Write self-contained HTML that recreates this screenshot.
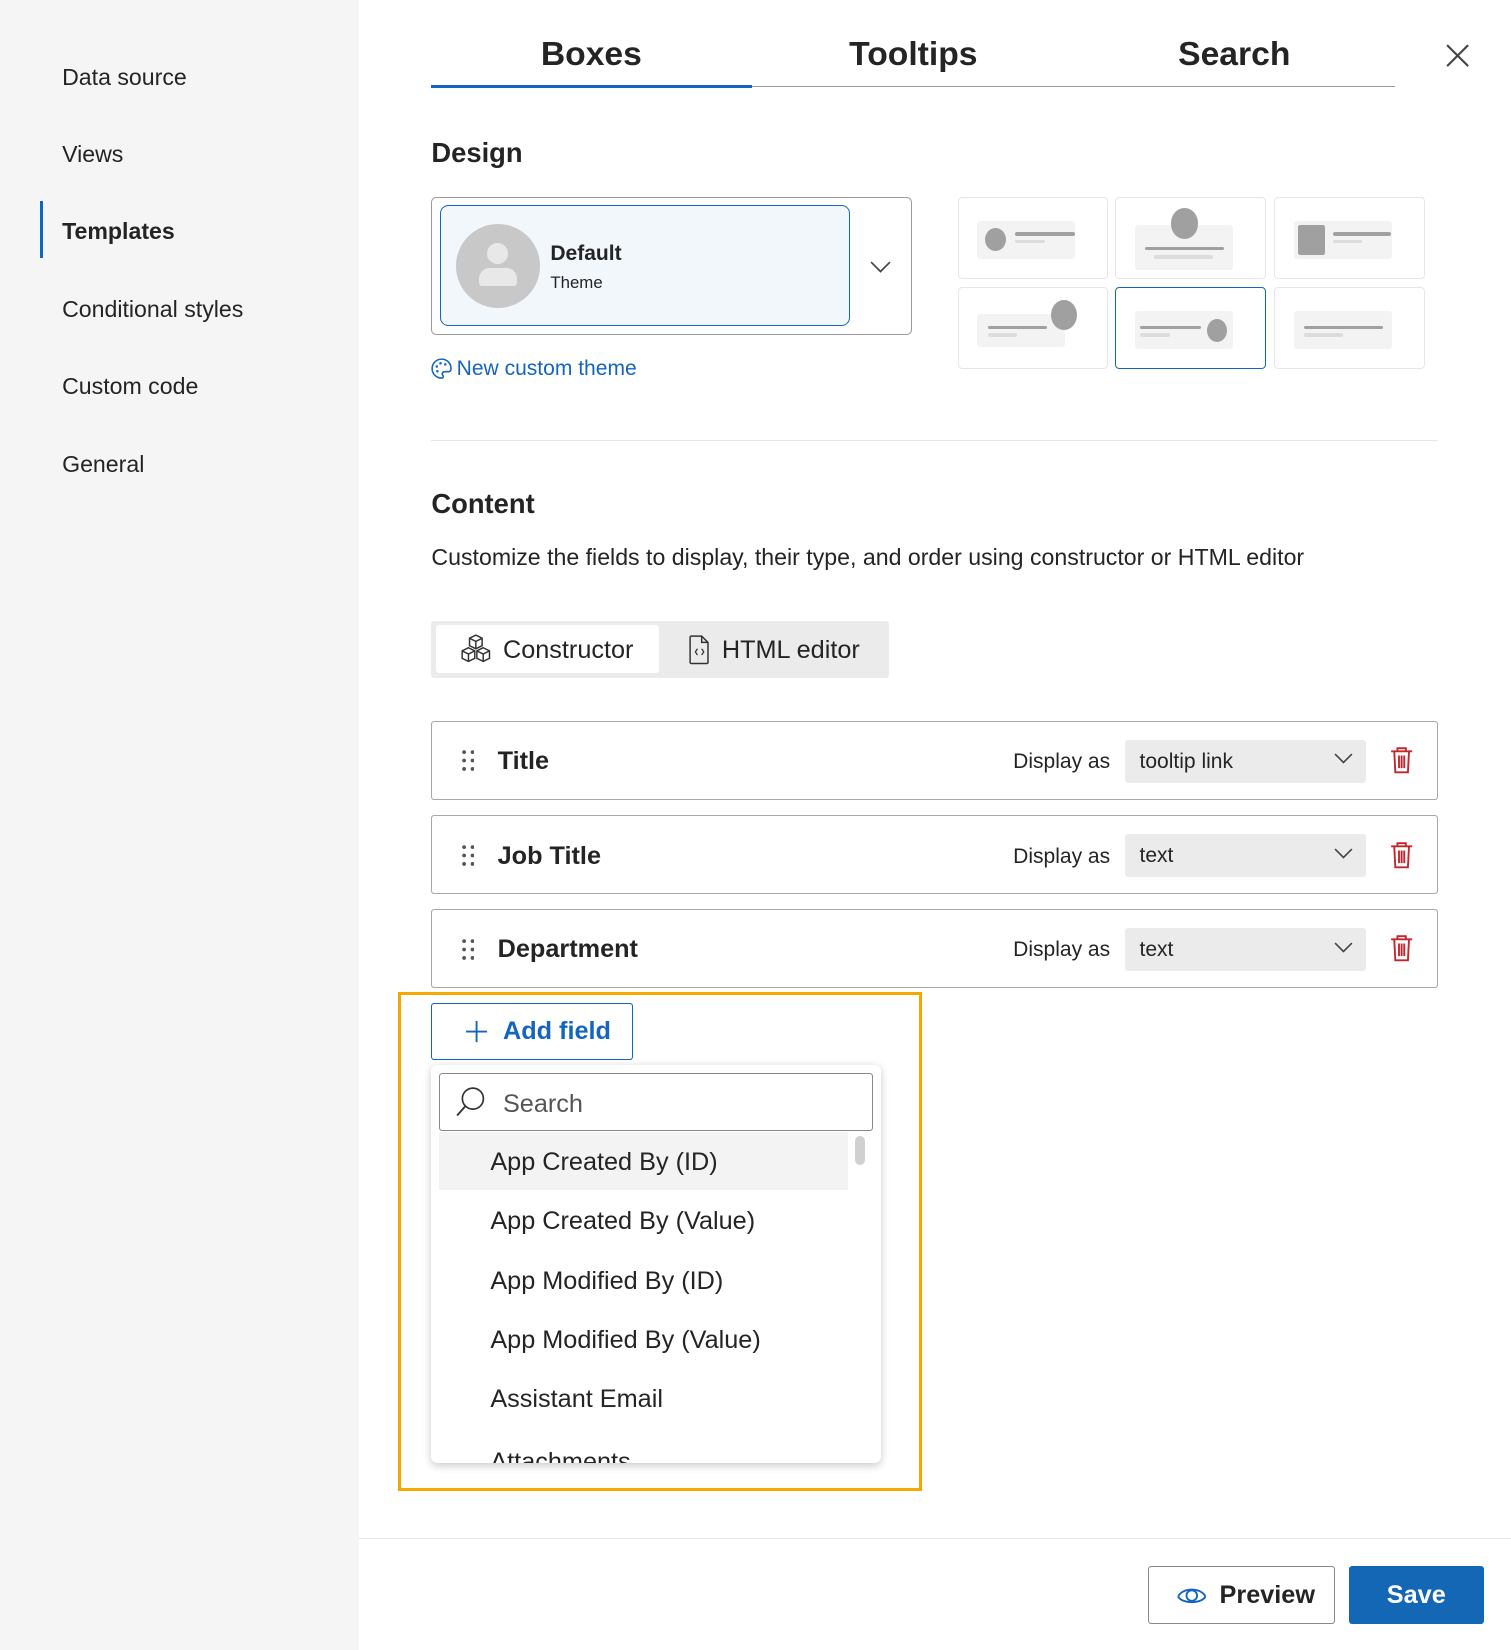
<!DOCTYPE html>
<html><head><meta charset="utf-8"><style>
*{box-sizing:border-box;margin:0;padding:0}
html,body{width:1511px;height:1650px;overflow:hidden;background:#fff}
#w{zoom:1.05223;position:relative;width:1436px;height:1568px;font-family:"Segoe UI","Liberation Sans",sans-serif;color:#242424}
.a{position:absolute}
.side{left:0;top:0;width:341px;height:1568px;background:#f5f5f5}
.nav{left:59px;font-size:22px;line-height:30px;color:#242424}
.tab{top:30px;font-size:32px;font-weight:600;line-height:44px;transform:translateX(-50%);color:#242424}
.h{font-size:26px;font-weight:600;line-height:34px}
.cell{width:143px;height:78px;border:1px solid #e6e6e6;border-radius:4px;background:#fff}
.cell .in{position:absolute;background:#f3f3f3;border-radius:3px}
.bar{position:absolute;height:3px;background:#a0a0a0;border-radius:2px}
.bar2{position:absolute;height:3px;background:#dcdcdc;border-radius:2px}
.dot{position:absolute;background:#a0a0a0;border-radius:50%}
.row{left:410px;width:957px;height:75px;border:1px solid #a8a8a8;border-radius:3px}
.row .t{position:absolute;left:62px;top:22px;font-size:24px;font-weight:600;line-height:32px}
.row .d{position:absolute;right:311px;top:24px;font-size:20px;line-height:28px}
.row .s{position:absolute;left:658px;top:17px;width:229px;height:41px;background:#ebebeb;border-radius:3px;font-size:20px;line-height:41px;padding-left:14px}
.item{left:466px;font-size:24px;line-height:32px;color:#242424}
</style></head><body><div id="w">
<div class="a side"></div>
<div class="a nav" style="top:59px">Data source</div>
<div class="a nav" style="top:132px">Views</div>
<div class="a" style="left:38px;top:191px;width:3px;height:54px;background:#1565c0"></div>
<div class="a nav" style="top:205px;font-weight:600">Templates</div>
<div class="a nav" style="top:279px">Conditional styles</div>
<div class="a nav" style="top:353px">Custom code</div>
<div class="a nav" style="top:427px">General</div>

<div class="a tab" style="left:562px">Boxes</div>
<div class="a tab" style="left:868px">Tooltips</div>
<div class="a tab" style="left:1173px">Search</div>
<div class="a" style="left:410px;top:82px;width:916px;height:1px;background:#999"></div>
<div class="a" style="left:410px;top:81px;width:305px;height:3px;background:#1565c0"></div>
<svg class="a" style="left:1373px;top:41px" width="24" height="24" viewBox="0 0 24 24"><path d="M2 2L22 22M22 2L2 22" stroke="#444" stroke-width="2"/></svg>

<div class="a h" style="left:410px;top:128px">Design</div>
<div class="a" style="left:410px;top:187px;width:457px;height:131px;border:1px solid #9a9a9a;border-radius:5px"></div>
<div class="a" style="left:418px;top:195px;width:390px;height:115px;background:#f2f7fc;border:1px solid #1565c0;border-radius:8px"></div>
<div class="a" style="left:433px;top:213px;width:80px;height:80px;border-radius:50%;background:#c8c8c8"></div>
<div class="a" style="left:463px;top:231px;width:20px;height:20px;border-radius:50%;background:#e8e8e8"></div>
<div class="a" style="left:455px;top:255px;width:36px;height:17px;border-radius:10px 10px 3px 3px;background:#e8e8e8"></div>
<div class="a" style="left:523px;top:227px;font-size:20px;font-weight:600;line-height:28px">Default</div>
<div class="a" style="left:523px;top:258px;font-size:16px;line-height:22px">Theme</div>
<svg class="a" style="left:827px;top:248px" width="20" height="12" viewBox="0 0 20 12"><path d="M1 1L10 10L19 1" stroke="#444" stroke-width="1.6" fill="none"/></svg>
<svg class="a" style="left:409px;top:339px" width="22" height="22" viewBox="0 0 22 22"><path d="M11 2a9 9 0 1 0 0 18c2 0 2-2 1-3s0-3 2-3h3c2 0 3-1 3-3 0-5-4-9-9-9z" stroke="#1565c0" stroke-width="1.5" fill="none"/><circle cx="6.5" cy="9" r="1.2" fill="#1565c0"/><circle cx="10" cy="6" r="1.2" fill="#1565c0"/><circle cx="14.5" cy="7" r="1.2" fill="#1565c0"/><circle cx="7" cy="13.5" r="1.2" fill="#1565c0"/></svg>
<div class="a" style="left:434px;top:336px;font-size:20px;line-height:28px;color:#1565c0">New custom theme</div>

<div class="a cell" style="left:910px;top:187px"><div class="in" style="left:18px;top:22px;width:93px;height:36px"></div><div class="dot" style="left:25px;top:29px;width:20px;height:22px"></div><div class="bar" style="left:54px;top:33px;width:57px"></div><div class="bar2" style="left:54px;top:40px;width:28px"></div></div>
<div class="a cell" style="left:1060px;top:187px"><div class="in" style="left:18px;top:26px;width:93px;height:43px"></div><div class="dot" style="left:52px;top:10px;width:26px;height:29px"></div><div class="bar" style="left:27px;top:47px;width:75px"></div><div class="bar2" style="left:36px;top:54px;width:56px;height:4px"></div></div>
<div class="a cell" style="left:1211px;top:187px"><div class="in" style="left:18px;top:22px;width:93px;height:36px"></div><div style="position:absolute;left:22px;top:26px;width:25px;height:28px;background:#a0a0a0;border-radius:2px"></div><div class="bar" style="left:55px;top:33px;width:55px"></div><div class="bar2" style="left:55px;top:40px;width:27px"></div></div>
<div class="a cell" style="left:910px;top:273px"><div class="in" style="left:18px;top:24px;width:83px;height:32px"></div><div class="dot" style="left:88px;top:11px;width:25px;height:29px"></div><div class="bar" style="left:28px;top:36px;width:56px"></div><div class="bar2" style="left:28px;top:43px;width:28px"></div></div>
<div class="a cell" style="left:1060px;top:273px;border-color:#1565c0"><div class="in" style="left:18px;top:22px;width:93px;height:36px"></div><div class="dot" style="left:86px;top:29px;width:19px;height:22px"></div><div class="bar" style="left:22px;top:36px;width:58px"></div><div class="bar2" style="left:22px;top:43px;width:29px"></div></div>
<div class="a cell" style="left:1211px;top:273px"><div class="in" style="left:18px;top:22px;width:93px;height:36px"></div><div class="bar" style="left:27px;top:36px;width:75px"></div><div class="bar2" style="left:27px;top:43px;width:37px"></div></div>

<div class="a" style="left:410px;top:418px;width:957px;height:1px;background:#e6e6e6"></div>
<div class="a h" style="left:410px;top:462px">Content</div>
<div class="a" style="left:410px;top:515px;font-size:22px;line-height:30px">Customize the fields to display, their type, and order using constructor or HTML editor</div>

<div class="a" style="left:410px;top:590px;width:435px;height:54px;background:#ebebeb;border-radius:3px"></div>
<div class="a" style="left:414px;top:594px;width:212px;height:46px;background:#fff;border-radius:3px"></div>
<svg class="a" style="left:436px;top:602px" width="32" height="30" viewBox="0 0 32 30"><g stroke="#333" stroke-width="1.4" fill="none"><path d="M16 2l6 3v7l-6 3-6-3V5z M10 5l6 3 6-3 M16 8v7"/><path d="M9 14l6 3v7l-6 3-6-3v-7z M3 17l6 3 6-3 M9 20v7"/><path d="M23 14l6 3v7l-6 3-6-3v-7z M17 17l6 3 6-3 M23 20v7"/></g></svg>
<div class="a" style="left:478px;top:603px;font-size:24px;line-height:32px">Constructor</div>
<svg class="a" style="left:654px;top:603px" width="22" height="30" viewBox="0 0 22 30"><path d="M3 2h10l6 6v19a1 1 0 0 1-1 1H3a1 1 0 0 1-1-1V3a1 1 0 0 1 1-1z M13 2v6h6" stroke="#333" stroke-width="1.4" fill="none"/><path d="M9 14l-2 3 2 3 M13 14l2 3-2 3" stroke="#333" stroke-width="1.2" fill="none"/></svg>
<div class="a" style="left:686px;top:603px;font-size:24px;line-height:32px">HTML editor</div>

<svg width="0" height="0" style="position:absolute"><defs><g id="dr"><circle cx="2" cy="2" r="1.8"/><circle cx="10" cy="2" r="1.8"/><circle cx="2" cy="10" r="1.8"/><circle cx="10" cy="10" r="1.8"/><circle cx="2" cy="18" r="1.8"/><circle cx="10" cy="18" r="1.8"/></g><g id="tr" stroke="#c4262e" stroke-width="1.8" fill="none"><path d="M2 6h20 M8 6V3h8v3 M5 6l1 20h12l1-20 M9.5 10v12 M12 10v12 M14.5 10v12"/></g><g id="ch"><path d="M1 1L9 9L17 1" stroke="#444" stroke-width="1.5" fill="none"/></g></defs></svg>

<div class="a row" style="top:685px"><svg style="position:absolute;left:28px;top:27px" width="12" height="20" fill="#555"><use href="#dr"/></svg><div class="t">Title</div><div class="d">Display as</div><div class="s">tooltip link</div><svg style="position:absolute;left:857px;top:30px" width="18" height="11"><use href="#ch"/></svg><svg style="position:absolute;left:909px;top:22px" width="24" height="29"><use href="#tr"/></svg></div>
<div class="a row" style="top:775px"><svg style="position:absolute;left:28px;top:27px" width="12" height="20" fill="#555"><use href="#dr"/></svg><div class="t">Job Title</div><div class="d">Display as</div><div class="s">text</div><svg style="position:absolute;left:857px;top:30px" width="18" height="11"><use href="#ch"/></svg><svg style="position:absolute;left:909px;top:22px" width="24" height="29"><use href="#tr"/></svg></div>
<div class="a row" style="top:864px"><svg style="position:absolute;left:28px;top:27px" width="12" height="20" fill="#555"><use href="#dr"/></svg><div class="t">Department</div><div class="d">Display as</div><div class="s">text</div><svg style="position:absolute;left:857px;top:30px" width="18" height="11"><use href="#ch"/></svg><svg style="position:absolute;left:909px;top:22px" width="24" height="29"><use href="#tr"/></svg></div>

<div class="a" style="left:378px;top:943px;width:498px;height:474px;border:3px solid #f5a800"></div>
<div class="a" style="left:410px;top:953px;width:192px;height:54px;border:1px solid #1565c0;border-radius:3px"></div>
<svg class="a" style="left:442px;top:969px" width="22" height="22"><path d="M11 1v20M1 11h20" stroke="#1565c0" stroke-width="1.8"/></svg>
<div class="a" style="left:478px;top:965px;font-size:24px;font-weight:600;line-height:32px;color:#1565c0">Add field</div>

<div class="a" style="left:410px;top:1012px;width:427px;height:378px;background:#fff;border-radius:6px;box-shadow:0 2px 8px rgba(0,0,0,.22);overflow:hidden">
 <div class="a" style="left:7px;top:8px;width:413px;height:55px;border:1px solid #8a8a8a;border-radius:3px"></div>
 <svg class="a" style="left:22px;top:20px" width="30" height="32" viewBox="0 0 30 32"><circle cx="17" cy="12" r="10" stroke="#333" stroke-width="1.6" fill="none"/><path d="M10 19L2 28" stroke="#333" stroke-width="1.8"/></svg>
 <div class="a" style="left:68px;top:22px;font-size:24px;line-height:32px;color:#555">Search</div>
 <div class="a" style="left:7px;top:64px;width:389px;height:55px;background:#f3f3f3"></div>
 <div class="a" style="left:403px;top:68px;width:9px;height:27px;background:#d0d0d0;border-radius:5px"></div>
 <div class="a item" style="left:56px;top:77px">App Created By (ID)</div>
 <div class="a item" style="left:56px;top:133px">App Created By (Value)</div>
 <div class="a item" style="left:56px;top:190px">App Modified By (ID)</div>
 <div class="a item" style="left:56px;top:246px">App Modified By (Value)</div>
 <div class="a item" style="left:56px;top:302px">Assistant Email</div>
 <div class="a item" style="left:56px;top:362px">Attachments</div>
</div>

<div class="a" style="left:341px;top:1462px;width:1095px;height:1px;background:#e6e6e6"></div>
<div class="a" style="left:1091px;top:1488px;width:178px;height:55px;border:1px solid #8a8a8a;border-radius:3px"></div>
<svg class="a" style="left:1118px;top:1505px" width="30" height="22" viewBox="0 0 30 22"><path d="M2 12C6 3 24 3 28 12" stroke="#1565c0" stroke-width="1.8" fill="none"/><path d="M2 12C6 19 24 19 28 12" stroke="#1565c0" stroke-width="1.8" fill="none"/><circle cx="15" cy="11" r="5" stroke="#1565c0" stroke-width="1.8" fill="none"/></svg>
<div class="a" style="left:1159px;top:1501px;font-size:24px;font-weight:600;line-height:32px">Preview</div>
<div class="a" style="left:1282px;top:1488px;width:128px;height:55px;background:#1467b5;border-radius:3px;color:#fff;font-size:24px;font-weight:600;line-height:57px;text-align:center">Save</div>
</div></body></html>
